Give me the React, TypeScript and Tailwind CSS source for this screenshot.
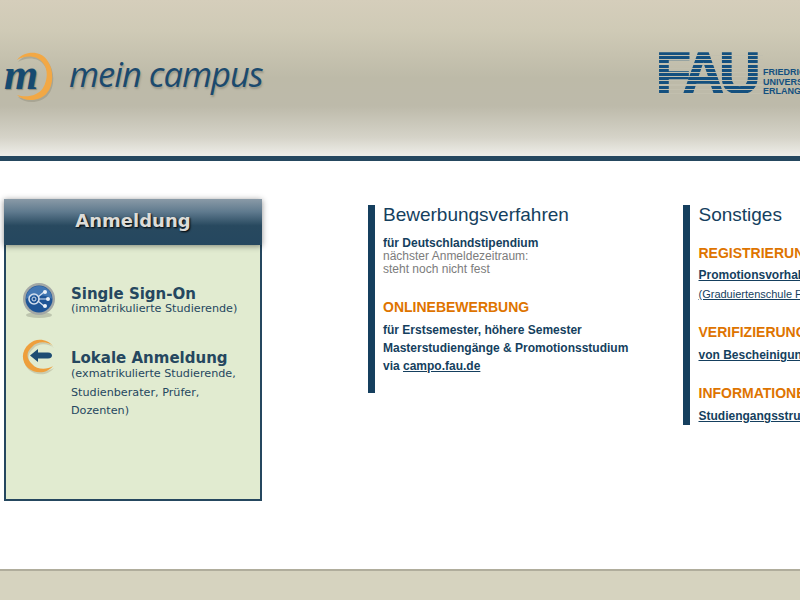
const arial = "font-['Liberation_Sans',Arial,sans-serif]"
const verdana = "font-['DejaVu_Sans',Verdana,sans-serif]"

function CampusMark() {
  const arc = "M13 8 C20 -1 36 -2 43 8 C50 17 50 33 43 41 C36 50 20 50 13 43 C22 46 34 44 39 36 C44 27 44 17 39 11 C33 3 21 3 13 8z"
  return (
    <div className="relative w-[54px] h-[54px] shrink-0">
      <svg className="absolute left-0 top-0" width="54" height="54" viewBox="0 0 54 54">
        <path d={arc} fill="#8f8b78" opacity="0.45" transform="translate(1 2)" />
        <path d={arc} fill="#f2a845" />
      </svg>
      <span className="absolute left-[0px] top-[-2px] font-['Liberation_Serif',serif] italic font-bold text-[44px] leading-[50px] text-[#174a70] [text-shadow:1px_1px_1px_#8f8b78]">m</span>
    </div>
  )
}

function FauLogo() {
  return (
    <div className="flex items-start w-[141px] shrink-0 overflow-hidden">
      <div className="relative w-[104px] h-[42px] shrink-0 overflow-hidden">
        <span className={`${arial} block ml-[-3px] font-bold text-[57px] leading-[42px] tracking-[-4.8px] text-[#14507f] [-webkit-text-stroke:1.5px_#14507f]`}>
          FAU
        </span>
        {/* horizontal cuts through the letters */}
        <div className="absolute inset-0 bg-[repeating-linear-gradient(180deg,transparent_0px,transparent_3.1px,#c2bfae_3.1px,#c2bfae_4.2px)]" />
      </div>
      <div className={`${arial} mt-[16px] font-bold text-[9px] leading-[9.5px] text-[#14507f] whitespace-nowrap`}>
        <div>FRIEDRICH-ALEXANDER</div>
        <div>UNIVERSITÄT</div>
        <div>ERLANGEN-NÜRNBERG</div>
      </div>
    </div>
  )
}

function SsoIcon() {
  return (
    <svg width="34" height="38" viewBox="0 0 34 38" className="shrink-0">
      <ellipse cx="17" cy="33" rx="13" ry="3" fill="#9aa08c" opacity="0.5" />
      <circle cx="17" cy="17" r="16" fill="#a3a8a6" />
      <circle cx="17" cy="17" r="13.5" fill="#1f5596" />
      <path d="M4 17a13 13 0 0 1 26 0c-6-5-18-5-26 0z" fill="#5d8fc7" opacity="0.6" />
      <circle cx="12" cy="17" r="5" fill="none" stroke="#d5e0ee" strokeWidth="1.6" />
      <circle cx="12" cy="17" r="2" fill="none" stroke="#d5e0ee" strokeWidth="1" />
      <path d="M16 15l6-5M17 17h8M16 19l6 5" stroke="#d5e0ee" strokeWidth="1.2" />
      <circle cx="23" cy="10" r="2" fill="#eef2f7" />
      <circle cx="26" cy="17" r="2" fill="#eef2f7" />
      <circle cx="23" cy="24" r="2" fill="#eef2f7" />
    </svg>
  )
}

function BackIcon() {
  const ring = "M31 8 C26 1 14 -1 7 6 C-1 13 -1 23 6 30 C13 36 25 36 31 28 C25 32 15 32 10 26 C4 20 4 14 10 9 C15 3 25 3 31 8z"
  return (
    <svg width="34" height="38" viewBox="0 0 34 38" className="shrink-0">
      <path d={ring} fill="#b9b99c" opacity="0.6" transform="translate(1 2)" />
      <path d={ring} fill="#ee9f3c" />
      <path d="M8 17.500l8-6.500v3.500h10c3 0 4 1.500 4 3s-1 3-4 3h-10v3.500z" fill="#1e4c73" />
    </svg>
  )
}

export default function App() {
  return (
    <div className="w-[800px] h-[600px] flex flex-col overflow-hidden bg-white">
      {/* Header */}
      <header className="h-[161px] shrink-0 border-b-[5px] border-[#25475f] flex items-start justify-between pl-[4px] pt-[52px] bg-[linear-gradient(180deg,#d5cebb_0%,#cfcab6_20%,#bdbaa8_50%,#bdbaaa_68%,#d5d3c8_88%,#efeee9_100%)]">
        <div className="flex items-start">
          <CampusMark />
          <span className="ml-[11px] font-['Open_Sans',sans-serif] italic text-[34.500px] leading-[44px] tracking-[-1px] text-[#1b4a6e] [text-shadow:1px_2px_2px_#9b9888]">
            mein campus
          </span>
        </div>
        <FauLogo />
      </header>

      {/* Content */}
      <main className="flex-1 flex items-start pl-[4px] pt-[38px] overflow-hidden">
        {/* Login box */}
        <section className={`${verdana} w-[258px] shrink-0`}>
          <h2 className="relative h-[46px] flex items-center justify-center pb-[3px] font-bold text-[18px] text-[#dcdcd8] [text-shadow:1px_1px_2px_#000] shadow-[0_1px_6px_rgba(0,0,0,0.45)] bg-[linear-gradient(180deg,#8a9aa7_0%,#5f7a8e_28%,#28495f_58%,#25475f_100%)]">
            Anmeldung
          </h2>
          <div className="h-[256px] border-2 border-t-0 border-[#25475f] bg-[#e1ebd0] pl-[16px] pt-[37px] text-[#25475f]">
            <div className="flex items-start">
              <SsoIcon />
              <div className="ml-[15px]">
                <div className="font-bold text-[15px] leading-[18px] mt-[3px]">Single Sign-On</div>
                <div className="text-[11.200px] leading-[12px]">(immatrikulierte Studierende)</div>
              </div>
            </div>
            <div className="flex items-start mt-[18px]">
              <BackIcon />
              <div className="ml-[15px]">
                <div className="font-bold text-[15px] leading-[18px] mt-[11px]">Lokale Anmeldung</div>
                <div className="text-[11.200px] leading-[18.500px] mt-[-2px] w-[175px]">
                  (exmatrikulierte Studierende,
                  <br />
                  Studienberater, Prüfer,
                  <br />
                  Dozenten)
                </div>
              </div>
            </div>
          </div>
        </section>

        {/* Bewerbungsverfahren */}
        <section className={`${arial} ml-[106px] mt-[6px] w-[315px] h-[188px] shrink-0 border-l-[7px] border-[#153f5e] pl-[8px] text-[#153f5e]`}>
          <h2 className="text-[19px] leading-[20px]">Bewerbungsverfahren</h2>
          <p className="mt-[11px] font-bold text-[12px] leading-[14px]">für Deutschlandstipendium</p>
          <p className="text-[12px] leading-[13px] text-[#7c7c7c]">
            nächster Anmeldezeitraum:
            <br />
            steht noch nicht fest
          </p>
          <h3 className="mt-[23px] font-bold text-[14px] leading-[16px] text-[#de7400]">ONLINEBEWERBUNG</h3>
          <div className="mt-[6px] font-bold text-[12px] leading-[18px]">
            <p>für Erstsemester, höhere Semester</p>
            <p>Masterstudiengänge &amp; Promotionsstudium</p>
            <p>
              via <a className="underline">campo.fau.de</a>
            </p>
          </div>
        </section>

        {/* Sonstiges */}
        <section className={`${arial} w-[300px] h-[220px] mt-[6px] shrink-0 border-l-[7px] border-[#153f5e] pl-[8.500px] text-[#153f5e] whitespace-nowrap`}>
          <h2 className="text-[19px] leading-[20px]">Sonstiges</h2>
          <h3 className="mt-[20px] font-bold text-[14px] leading-[16px] text-[#de7400]">REGISTRIERUNG</h3>
          <p className="mt-[6px] font-bold text-[12px] leading-[16px]">
            <a className="underline">Promotionsvorhaben</a>
          </p>
          <p className="mt-[5px] text-[11px] leading-[13px]">
            <a className="underline">(Graduiertenschule FAU)</a>
          </p>
          <h3 className="mt-[23px] font-bold text-[14px] leading-[16px] text-[#de7400]">VERIFIZIERUNG</h3>
          <p className="mt-[7px] font-bold text-[12px] leading-[16px]">
            <a className="underline">von Bescheinigungen</a>
          </p>
          <h3 className="mt-[22px] font-bold text-[14px] leading-[16px] text-[#de7400]">INFORMATIONEN</h3>
          <p className="mt-[7px] font-bold text-[12px] leading-[16px]">
            <a className="underline">Studiengangsstruktur</a>
          </p>
        </section>
      </main>

      {/* Footer */}
      <footer className="h-[31px] shrink-0 border-t-2 border-[#b0ad9c] bg-[#d6d3bf]" />
    </div>
  )
}
